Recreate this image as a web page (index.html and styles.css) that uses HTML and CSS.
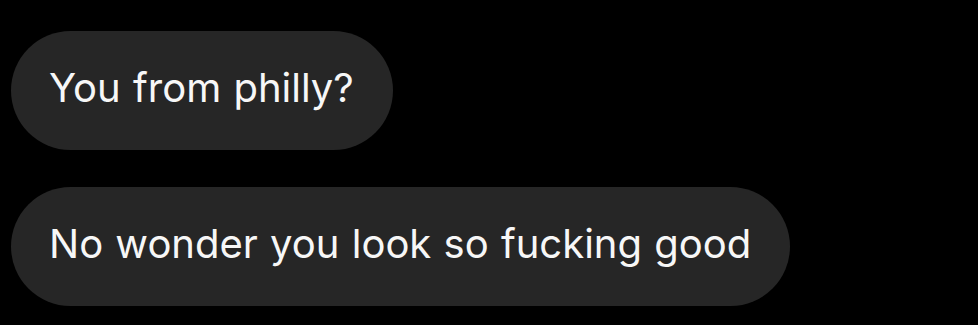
FILE: index.html
```html
<!DOCTYPE html>
<html lang="en">
     <head>
          <meta http-equiv="Content-type" content="text/html; charset=utf-8">
          <title>Messages</title>
          <link rel="stylesheet" href="styles.css">
     </head>
     <body>
          <div class="thread">
               <div class="bubble">You from philly?</div>
               <div class="bubble">No wonder you look so fucking good</div>
          </div>
     </body>
</html>
```
FILE: styles.css
```css
html{
     height: 100%;
}
body{
     padding: 0;
     margin: 0;
     height: 100%;
     background-color: #000;
     font-family: Inter, "Liberation Sans", sans-serif;
}
.thread{
     display: flex;
     flex-direction: column;
     align-items: flex-start;
     gap: 37px;
     padding: 31px 0 0 11px;
}
.bubble{
     background-color: #262626;
     color: #f7f7f7;
     font-size: 40px;
     word-spacing: 1px;
     line-height: 113px;
     padding: 0 39px 6px 38px;
     border-radius: 60px;
     white-space: nowrap;
}
```
